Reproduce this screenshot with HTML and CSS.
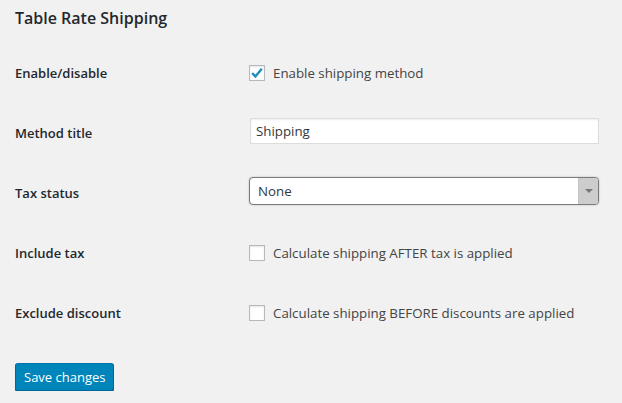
FILE: index.html
```html
<!DOCTYPE html>
<html>
<head>
<meta charset="utf-8">
<link rel="stylesheet" href="styles.css">
</head>
<body>
<div class="wrap">
  <h2 class="title">Table Rate Shipping</h2>
  <div class="form">
    <div class="label">Enable/disable</div>
    <div class="field">
      <label class="check">
        <span class="box checked">
          <svg width="14" height="14" viewBox="0 0 14 14"><path d="M2.2 7.2 L5.4 10.4 L11.8 2.8" fill="none" stroke="#1e8cbe" stroke-width="2.4"/></svg>
        </span>
        <span>Enable shipping method</span>
      </label>
    </div>

    <div class="label">Method title</div>
    <div class="field raised">
      <div class="input">Shipping</div>
    </div>

    <div class="label">Tax status</div>
    <div class="field raised">
      <div class="select">
        <span class="select-value">None</span>
        <span class="select-arrow"><span class="tri"></span></span>
      </div>
    </div>

    <div class="label">Include tax</div>
    <div class="field">
      <label class="check">
        <span class="box"></span>
        <span>Calculate shipping AFTER tax is applied</span>
      </label>
    </div>

    <div class="label">Exclude discount</div>
    <div class="field">
      <label class="check">
        <span class="box"></span>
        <span>Calculate shipping BEFORE discounts are applied</span>
      </label>
    </div>
  </div>
  <button class="button">Save changes</button>
</div>
</body>
</html>
```
FILE: styles.css
```css
html, body {
  margin: 0;
  padding: 0;
  background: #f1f1f1;
}
body {
  font-family: "Open Sans", "Noto Sans", sans-serif;
  font-size: 13px;
  color: #23282d;
}
.wrap {
  padding: 0 15px;
}
.title {
  margin: 7px 0 14px;
  font-size: 16px;
  line-height: 22px;
  font-weight: 600;
  color: #23282d;
}
.form {
  display: grid;
  grid-template-columns: 234px 350px;
  grid-auto-rows: 60px;
  align-items: center;
}
.label {
  font-weight: 600;
  font-size: 13px;
  color: #23282d;
}
.field {
  display: flex;
  align-items: center;
  font-size: 13.3px;
}
.field.raised {
  padding-bottom: 4px;
}
.check {
  display: flex;
  align-items: center;
  gap: 8px;
  color: #444;
}
.box {
  width: 14px;
  height: 14px;
  border: 1px solid #b4b9be;
  background: #fff;
  box-shadow: inset 0 1px 2px rgba(0,0,0,.1);
  display: flex;
  align-items: center;
  justify-content: center;
}
.input {
  margin-left: 1px;
  width: 338px;
  height: 24px;
  border: 1px solid #ddd;
  background: #fff;
  box-shadow: inset 0 1px 2px rgba(0,0,0,.07);
  padding: 0 5px;
  line-height: 24px;
  color: #32373c;
}
.select {
  width: 348px;
  height: 26px;
  border: 1px solid #7a7a7a;
  border-radius: 4px;
  background: #fff;
  box-shadow: 0 0 2px rgba(0,0,0,.25);
  display: flex;
  align-items: stretch;
  overflow: hidden;
}
.select-value {
  flex: 1;
  padding-left: 8px;
  line-height: 26px;
  color: #32373c;
}
.select-arrow {
  width: 19px;
  background: #cdcdcd;
  border-left: 1px solid #c4c4c4;
  display: flex;
  align-items: center;
  justify-content: center;
}
.tri {
  width: 0;
  height: 0;
  border-left: 4px solid transparent;
  border-right: 4px solid transparent;
  border-top: 4px solid #777;
}
.button {
  margin-top: 20px;
  height: 28px;
  padding: 0 8px 1px;
  background: #0085ba;
  border: 1px solid #0073aa;
  border-color: #0073aa #006799 #006799;
  border-radius: 3px;
  box-shadow: 0 1px 0 #006799;
  color: #fff;
  font-family: "Open Sans", "Noto Sans", sans-serif;
  font-size: 13px;
  line-height: 26px;
}
```
